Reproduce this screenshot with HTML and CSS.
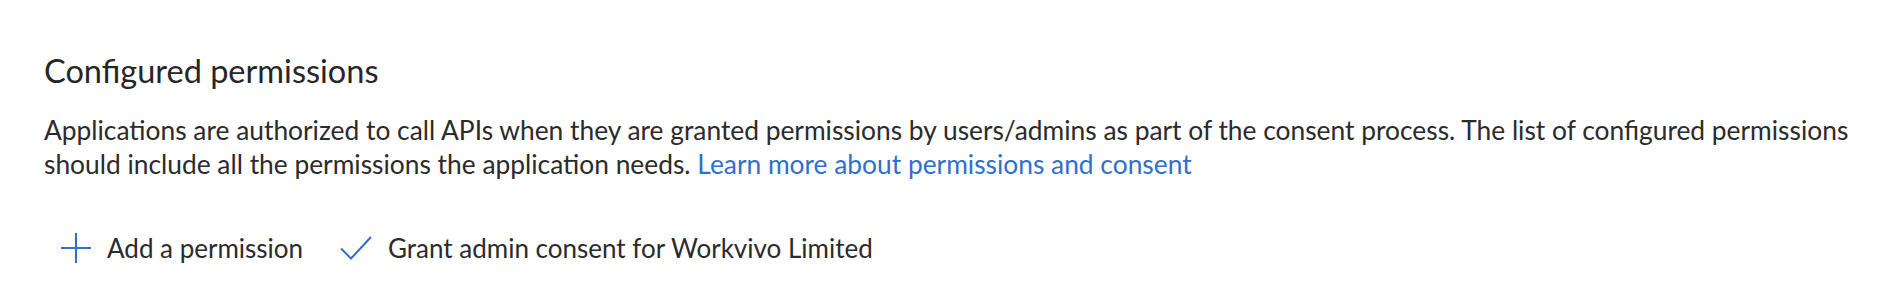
FILE: index.html
```html
<!DOCTYPE html>
<html lang="en">
<head>
<meta charset="utf-8">
<title>Configured permissions</title>
<link rel="stylesheet" href="styles.css">
</head>
<body>
<section class="permissions">
  <h2 class="permissions__title">Configured permissions</h2>
  <p class="permissions__desc"><span class="permissions__text">Applications are authorized to call APIs when they are granted permissions by users/admins as part of the consent process. The list of configured permissions</span> <span class="permissions__text">should include all the permissions the application needs.</span> <a class="permissions__link" href="#">Learn more about permissions and consent</a></p>
  <div class="toolbar">
    <button class="toolbar__btn" type="button">
      <svg class="toolbar__icon toolbar__icon--plus" viewBox="0 0 30 30" width="30" height="30" aria-hidden="true"><path d="M0 15H30M15 0V30" fill="none" stroke="currentColor" stroke-width="2"/></svg>
      <span class="toolbar__label">Add a permission</span>
    </button>
    <button class="toolbar__btn" type="button">
      <svg class="toolbar__icon toolbar__icon--check" viewBox="0 0 32 32" width="32" height="32" aria-hidden="true"><path d="M1 16.5L11 26.5L31 5" fill="none" stroke="currentColor" stroke-width="2"/></svg>
      <span class="toolbar__label">Grant admin consent for Workvivo Limited</span>
    </button>
  </div>
</section>
</body>
</html>
```
FILE: styles.css
```css
html, body {
  margin: 0;
  padding: 0;
  background: #ffffff;
}

body {
  font-family: "Lato", "Open Sans", sans-serif;
  color: #2b2b2b;
}

.permissions {
  padding: 50px 0 0 44px;
}

.permissions__title {
  margin: 0;
  font-size: 32.5px;
  line-height: 41px;
  font-weight: 400;
  color: #262626;
}

.permissions__desc {
  margin: 22px 0 0 0;
  font-size: 26.35px;
  line-height: 34px;
  max-width: 1830px;
}

.permissions__link {
  color: #2f6fce;
  text-decoration: none;
}

.toolbar {
  display: flex;
  align-items: center;
  gap: 37px;
  margin: 50px 0 0 17px;
  height: 34px;
}

.toolbar__btn {
  display: flex;
  align-items: center;
  gap: 16px;
  padding: 0;
  border: 0;
  background: none;
  font: inherit;
  font-size: 26px;
  line-height: 34px;
  color: #2b2b2b;
  cursor: pointer;
}

.toolbar__icon {
  display: block;
  color: #2f6fce;
  flex: none;
}
```
